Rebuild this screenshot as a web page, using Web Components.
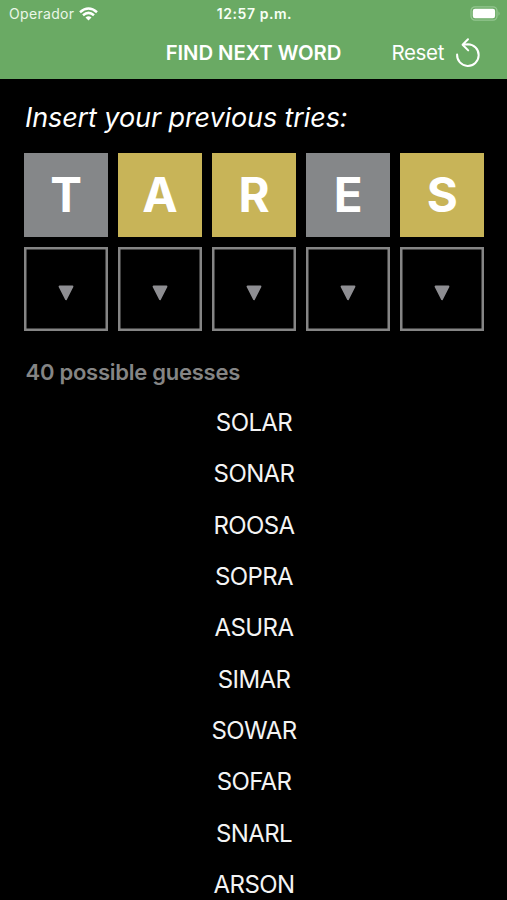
<!DOCTYPE html>
<html lang="en"><head><meta charset="utf-8"><title>Find next word</title>
<style>
html,body{margin:0;background:#000}
body{width:507px;height:900px;overflow:hidden;font-family:Inter,"Liberation Sans",sans-serif;color:#fff}
</style></head><body>
<word-app></word-app>
<script>
const define=(name,html)=>{
  const t=document.createElement('template');t.innerHTML=html;
  customElements.define(name,class extends HTMLElement{
    constructor(){super();this.attachShadow({mode:'open'}).append(t.content.cloneNode(true));}
  });
};
define('status-bar',`<style>
:host{display:grid;grid-template-columns:1fr auto 1fr;align-items:center;height:27px;padding:0 6px 0 9px;box-sizing:border-box;line-height:18px}
.left{display:flex;align-items:center;gap:4.5px;font-size:14px;color:#eaf7e8;letter-spacing:.32px}
.time{font-size:14px;font-weight:600;letter-spacing:.55px;color:#f7fff5;margin-left:-1px}
.right{display:flex;justify-content:flex-end}
svg{display:block}
</style>
<div class="left"><span>Operador</span><svg width="19" height="14" viewBox="0 0 19 14" fill="none" stroke="#fff" stroke-width="2.5"><path d="M1 5.2Q9.5-2.2 18 5.2M4 8.3Q9.5 3.5 15 8.3"/><path d="M6.5 10.5Q9.5 8 12.5 10.5L9.5 13.6Z" fill="#fff" stroke="none"/></svg></div>
<div class="time">12:57 p.m.</div>
<div class="right"><svg width="31" height="16" viewBox="0 0 31 16"><rect x="1" y=".9" width="26" height="13.2" rx="4" fill="none" stroke="#94c690" stroke-width="1.3"/><rect x="2.8" y="2.8" width="22.3" height="9.5" rx="2.2" fill="#fff"/><path d="M28.5 5.2Q30.8 7.5 28.5 9.8Z" fill="#94c690"/></svg></div>`);
define('reset-button',`<style>
:host{display:flex;align-items:center;gap:11px;font-size:20.5px;line-height:26px;letter-spacing:-.35px}
svg{display:block}
</style><span><slot></slot></span>
<svg width="26" height="32" viewBox="0 0 26 32" fill="none" stroke="#fff" stroke-width="2" stroke-linecap="round" stroke-linejoin="round"><path d="M2.1 17.5A10.8 10.8 0 1 0 12.9 7.3L8.2 7.7M13 2.2L7.6 7.7L13.2 13.4"/></svg>`);
define('nav-bar',`<style>
:host{display:grid;grid-template-columns:1fr auto 1fr;align-items:center;height:52px;padding:0 26px;box-sizing:border-box}
.title{grid-column:2;font-size:20.3px;font-weight:600;line-height:26px;letter-spacing:-.06px}
.action{justify-self:end}
</style><div class="title"><slot></slot></div><div class="action"><slot name="action"></slot></div>`);
define('drop-arrow',`<style>:host{display:block}svg{display:block}</style>
<svg width="16" height="16" viewBox="0 0 16 16"><path d="M1.5 1.5H14.5L8 14.3Z" fill="#8e8e92" stroke="#8e8e92" stroke-width="1.8" stroke-linejoin="round"/></svg>`);
customElements.define('letter-tile',class extends HTMLElement{
  constructor(){super();this.attachShadow({mode:'open'}).innerHTML=`<style>
:host{display:flex;align-items:center;justify-content:center;width:84px;height:84px;box-sizing:border-box;font-size:47.5px;font-weight:700;line-height:58px;background:#858789}
:host([state=present]){background:#c8b458}
:host([state=empty]){background:none;box-shadow:inset 0 0 0 2.5px #858585;padding-top:8px}
</style><slot></slot>`;}
});
define('tile-grid',`<style>
:host{display:grid;grid-template-columns:repeat(5,84px);column-gap:10.1px;row-gap:10px;margin:18px 0 0 24px}
</style><slot></slot>`);
customElements.define('guess-list',class extends HTMLElement{
  constructor(){super();this.attachShadow({mode:'open'}).innerHTML=`<style>
:host{display:flex;flex-direction:column;padding-left:1px}
div{height:51.35px;line-height:51.35px;font-size:24px;text-align:center;letter-spacing:-.6px;color:#f4f4f4}
</style>`+this.getAttribute('words').split(' ').map(w=>`<div>${w}</div>`).join('');}
});
define('word-app',`<style>
:host{display:block;width:507px;height:900px;overflow:hidden;background:#000}
header{background:#6aaa64;height:79px}
h1{margin:22px 0 0 25px;font-size:27px;font-weight:400;font-style:italic;line-height:34px;letter-spacing:-.1px}
h2{margin:26px 0 10px 25.5px;font-size:22px;font-weight:600;line-height:30px;letter-spacing:-.25px;color:#858585}
</style>
<header><status-bar></status-bar><nav-bar>FIND NEXT WORD<reset-button slot="action">Reset</reset-button></nav-bar></header>
<h1>Insert your previous tries:</h1>
<tile-grid><letter-tile>T</letter-tile><letter-tile state="present">A</letter-tile><letter-tile state="present">R</letter-tile><letter-tile>E</letter-tile><letter-tile state="present">S</letter-tile>${'<letter-tile state="empty"><drop-arrow></drop-arrow></letter-tile>'.repeat(5)}</tile-grid>
<h2>40 possible guesses</h2>
<guess-list words="SOLAR SONAR ROOSA SOPRA ASURA SIMAR SOWAR SOFAR SNARL ARSON"></guess-list>`);
</script></body></html>
